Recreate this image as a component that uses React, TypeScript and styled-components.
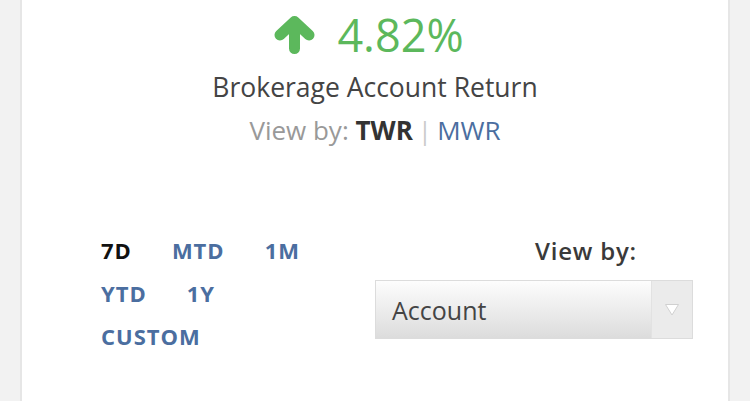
import React from "react";
import styled, { createGlobalStyle } from "styled-components";

const Global = createGlobalStyle`
  html, body { margin: 0; padding: 0; background: #f2f2f2; }
  body { font-family: "Open Sans", "Noto Sans", sans-serif; }
  * { box-sizing: border-box; }
`;

const Page = styled.div`
  height: 401px;
  overflow: hidden;
  padding: 0 20px;
`;

const Card = styled.div`
  background: #fff;
  border-left: 2px solid #e6e6e6;
  border-right: 2px solid #e6e6e6;
  height: 401px;
  display: flex;
  flex-direction: column;
`;

const Summary = styled.div`
  display: flex;
  flex-direction: column;
  align-items: center;
  padding-top: 11px;
`;

const ReturnRow = styled.div`
  display: flex;
  align-items: center;
  gap: 22px;
  height: 48px;
  margin-right: 12px;
`;

const Percent = styled.span`
  font-size: 45px;
  color: #5cb85c;
  line-height: 48px;
  font-weight: 400;
`;

const Title = styled.div`
  margin-top: 13px;
  font-size: 26.5px;
  line-height: 30px;
  color: #444;
`;

const ViewToggle = styled.div`
  margin-top: 14px;
  font-size: 26px;
  line-height: 28px;
  color: #999;
`;

const ToggleOption = styled.span<{ $active?: boolean }>`
  color: ${(p) => (p.$active ? "#333" : "#4b6ea0")};
  font-weight: ${(p) => (p.$active ? 700 : 400)};
`;

const Divider = styled.span`
  color: #ccc;
  margin: 0 5px;
`;

const Controls = styled.div`
  display: flex;
  justify-content: space-between;
  padding: 0 35px 0 79px;
  margin-top: 92px;
`;

const Periods = styled.div`
  display: flex;
  flex-wrap: wrap;
  column-gap: 40px;
  row-gap: 14px;
  width: 250px;
  align-content: flex-start;
`;

const Period = styled.span<{ $active?: boolean }>`
  font-size: 22px;
  line-height: 29px;
  font-weight: 700;
  letter-spacing: 1px;
  color: ${(p) => (p.$active ? "#111" : "#4b6ea0")};
`;

const ViewBy = styled.div`
  display: flex;
  flex-direction: column;
  align-items: flex-end;
`;

const ViewLabel = styled.div`
  font-size: 24px;
  line-height: 29px;
  font-weight: 600;
  letter-spacing: 0.8px;
  color: #3a3a3a;
  padding-right: 56px;
`;

const Select = styled.div`
  margin-top: 15px;
  width: 318px;
  height: 59px;
  border: 1px solid #dcdcdc;
  display: flex;
`;

const SelectValue = styled.div`
  flex: 1;
  display: flex;
  align-items: center;
  padding-left: 16px;
  font-size: 25px;
  color: #444;
  background: linear-gradient(#fdfdfd, #dcdcdc);
`;

const SelectArrow = styled.div`
  width: 41px;
  background: #ebebeb;
  border-left: 1px solid #e2e2e2;
  display: flex;
  align-items: center;
  justify-content: center;
`;

const UpArrow = () => (
  <svg width="41" height="38" viewBox="0 0 41 38">
    <path
      d="M20.5 32.5 V6 M6 19 L20.5 5.5 L35 19"
      stroke="#5cb85c"
      strokeWidth="11"
      strokeLinecap="round"
      strokeLinejoin="round"
      fill="none"
    />
  </svg>
);

const Caret = () => (
  <svg width="14" height="12" viewBox="0 0 14 12">
    <path d="M0.5 0.5 H13.5 L7 11 Z" fill="#fff" stroke="#d0d0d0" strokeWidth="1" strokeLinejoin="round" />
  </svg>
);

export default function App() {
  return (
    <>
      <Global />
      <Page>
        <Card>
          <Summary>
            <ReturnRow>
              <UpArrow />
              <Percent>4.82%</Percent>
            </ReturnRow>
            <Title>Brokerage Account Return</Title>
            <ViewToggle>
              View by: <ToggleOption $active>TWR</ToggleOption>
              <Divider>|</Divider>
              <ToggleOption>MWR</ToggleOption>
            </ViewToggle>
          </Summary>
          <Controls>
            <Periods>
              <Period $active>7D</Period>
              <Period>MTD</Period>
              <Period>1M</Period>
              <Period>YTD</Period>
              <Period>1Y</Period>
              <Period>CUSTOM</Period>
            </Periods>
            <ViewBy>
              <ViewLabel>View by:</ViewLabel>
              <Select>
                <SelectValue>Account</SelectValue>
                <SelectArrow>
                  <Caret />
                </SelectArrow>
              </Select>
            </ViewBy>
          </Controls>
        </Card>
      </Page>
    </>
  );
}
